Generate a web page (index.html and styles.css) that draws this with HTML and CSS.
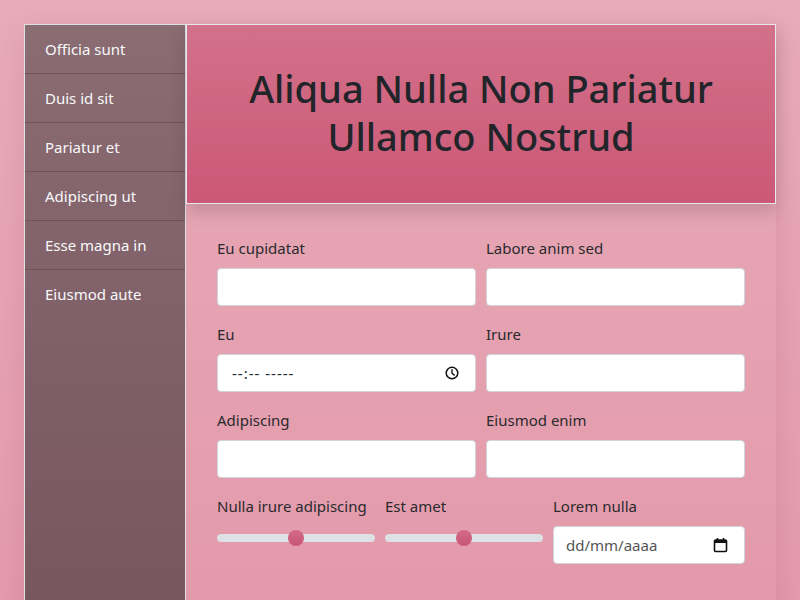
FILE: index.html
```html
<!DOCTYPE html>
<html lang="pt">
<head>
<meta charset="utf-8">
<title>Aliqua Nulla</title>
<link rel="stylesheet" href="styles.css">
</head>
<body>
<div class="layout">
  <nav class="sidebar">
    <a class="nav-item" href="#">Officia sunt</a>
    <a class="nav-item" href="#">Duis id sit</a>
    <a class="nav-item" href="#">Pariatur et</a>
    <a class="nav-item" href="#">Adipiscing ut</a>
    <a class="nav-item" href="#">Esse magna in</a>
    <a class="nav-item" href="#">Eiusmod aute</a>
  </nav>
  <main class="main">
    <header class="hero">
      <h1 class="hero-title">Aliqua Nulla Non Pariatur<br>Ullamco Nostrud</h1>
    </header>
    <form class="form">
      <div class="grid-2">
        <div class="field">
          <label class="label">Eu cupidatat</label>
          <input class="control" type="text">
        </div>
        <div class="field">
          <label class="label">Labore anim sed</label>
          <input class="control" type="text">
        </div>
        <div class="field">
          <label class="label">Eu</label>
          <div class="control-wrap">
            <input class="control control-time" type="text" placeholder="--:-- -----">
            <svg class="control-icon" width="14" height="14" viewBox="0 0 16 16"><circle cx="8" cy="8" r="6.6" fill="none" stroke="#111" stroke-width="1.7"/><path d="M8 4.2V8.3l2.6 2.1" fill="none" stroke="#111" stroke-width="1.6" stroke-linecap="round"/></svg>
          </div>
        </div>
        <div class="field">
          <label class="label">Irure</label>
          <input class="control" type="text">
        </div>
        <div class="field">
          <label class="label">Adipiscing</label>
          <input class="control" type="text">
        </div>
        <div class="field">
          <label class="label">Eiusmod enim</label>
          <input class="control" type="text">
        </div>
      </div>
      <div class="grid-3">
        <div class="field">
          <label class="label">Nulla irure adipiscing</label>
          <input class="range" type="range" min="0" max="100" value="50">
        </div>
        <div class="field">
          <label class="label">Est amet</label>
          <input class="range" type="range" min="0" max="100" value="50">
        </div>
        <div class="field">
          <label class="label">Lorem nulla</label>
          <div class="control-wrap">
            <input class="control control-date" type="text" placeholder="dd/mm/aaaa">
            <svg class="control-icon" width="15" height="16" viewBox="0 0 15 16"><rect x="1.5" y="3" width="12" height="11.5" rx="1" fill="none" stroke="#111" stroke-width="1.6"/><rect x="1.5" y="3" width="12" height="3" fill="#111"/><path d="M4.5 1v3M10.5 1v3" stroke="#111" stroke-width="1.6"/></svg>
          </div>
        </div>
      </div>
    </form>
  </main>
</div>
</body>
</html>
```

FILE: styles.css
```css
* { box-sizing: border-box; }
html, body { margin: 0; height: 100%; }
body {
  font-family: "Noto Sans", "Open Sans", sans-serif;
  font-size: 15px;
  line-height: 1.5;
  color: #212529;
  background: linear-gradient(180deg, #e8abb8 0%, #e39aab 100%);
  padding: 24px 24px 0;
  overflow: hidden;
}
.layout {
  display: flex;
  min-height: 700px;
  box-shadow: 0 8px 24px rgba(120, 40, 60, 0.12);
}
.sidebar {
  width: 162px;
  flex: none;
  display: flex;
  flex-direction: column;
  background: linear-gradient(180deg, #8a6c73 0%, #74525b 100%);
  border: 1px solid #dde0e4;
}
.nav-item {
  display: block;
  padding: 12px 20px;
  line-height: 24px;
  color: #f8f9fa;
  text-decoration: none;
  border-bottom: 1px solid rgba(90, 55, 65, 0.45);
}
.nav-item:last-child { border-bottom: none; }
.main {
  flex: 1;
  min-width: 0;
}
.hero {
  background: linear-gradient(180deg, #d3718a 0%, #cb5876 100%);
  border: 1px solid #e8e9ec;
  padding: 39px 16px 43px;
  text-align: center;
  box-shadow: 0 8px 16px rgba(0, 0, 0, 0.15);
}
.hero-title {
  margin: 0;
  font-size: 38px;
  font-weight: 500;
  line-height: 48px;
  color: #212529;
}
.form {
  padding: 32px 31px;
  display: flex;
  flex-direction: column;
}
.grid-2 {
  display: grid;
  grid-template-columns: 1fr 1fr;
  column-gap: 10px;
}
.grid-3 {
  display: grid;
  grid-template-columns: 158px 158px 1fr;
  column-gap: 10px;
}
.field {
  display: flex;
  flex-direction: column;
  margin-bottom: 16px;
}
.label {
  line-height: 24px;
  margin-bottom: 8px;
  color: #2a2a2e;
}
.control-wrap {
  position: relative;
}
.control {
  display: block;
  width: 100%;
  height: 38px;
  padding: 6px 12px;
  font: inherit;
  font-size: 15px;
  color: #212529;
  background: #fff;
  border: 1px solid #ced4da;
  border-radius: 4px;
  outline: none;
}
.control-time { padding-left: 14px; }
.control-time::placeholder { color: #212529; letter-spacing: 1px; }
.control-date::placeholder { color: #555; }
.control-icon {
  position: absolute;
  right: 17px;
  top: 50%;
  transform: translateY(-50%);
}
.range {
  -webkit-appearance: none;
  appearance: none;
  width: 100%;
  height: 24px;
  margin: 0;
  background: transparent;
}
.range::-webkit-slider-runnable-track {
  height: 8px;
  background: #dee2e6;
  border-radius: 4px;
}
.range::-webkit-slider-thumb {
  -webkit-appearance: none;
  width: 16px;
  height: 16px;
  margin-top: -4px;
  border-radius: 50%;
  border: none;
  background: linear-gradient(180deg, #d36a86, #c95575);
}
```
